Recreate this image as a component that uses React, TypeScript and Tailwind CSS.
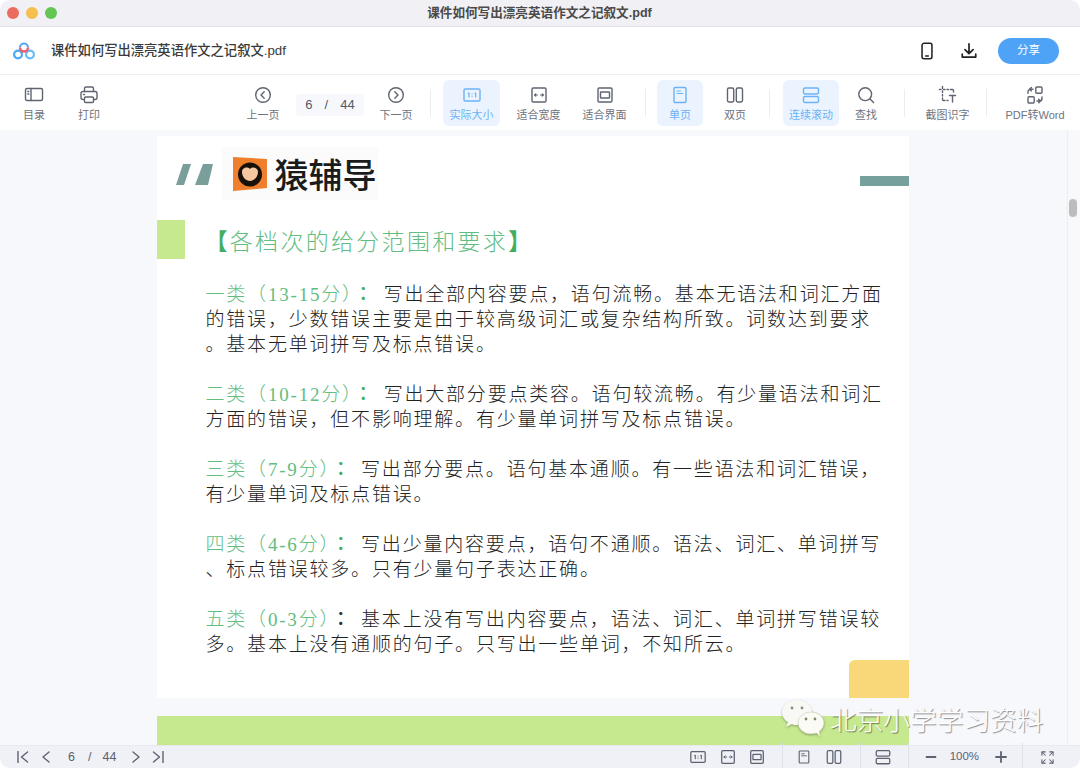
import type { ReactNode } from 'react';
import clsx from 'clsx';

const UI_FONT = "font-['Liberation_Sans','Noto_Sans_CJK_SC',sans-serif]";

function Svg({ className, children, box = 20 }: { className?: string; children: ReactNode; box?: number }) {
  return (
    <svg
      viewBox={`0 0 ${box} ${box}`}
      fill="none"
      stroke="currentColor"
      strokeWidth="1.4"
      strokeLinecap="round"
      strokeLinejoin="round"
      className={className}
    >
      {children}
    </svg>
  );
}

type IconProps = { className?: string };

const TocIcon = ({ className }: IconProps) => (
  <Svg className={className}>
    <rect x="1.500" y="3.500" width="17" height="12" rx="1.500" />
    <path d="M7 3.500v12M3.800 6.500h1M3.800 9h1" />
  </Svg>
);
const PrintIcon = ({ className }: IconProps) => (
  <Svg className={className}>
    <path d="M5.500 6.500V3.500a1.500 1.500 0 0 1 1.500-1.500h6a1.500 1.500 0 0 1 1.500 1.500v3" />
    <path d="M5 14.500H4a2 2 0 0 1-2-2V8.500a2 2 0 0 1 2-2h12a2 2 0 0 1 2 2v4a2 2 0 0 1-2 2h-1" />
    <rect x="5.500" y="12" width="9" height="5.500" rx="1" />
    <path d="M4.500 9.500h1" />
  </Svg>
);
const PrevCircle = ({ className }: IconProps) => (
  <Svg className={className}>
    <circle cx="10" cy="10" r="7.300" />
    <path d="M11.200 6.800 8 10l3.200 3.200" />
  </Svg>
);
const NextCircle = ({ className }: IconProps) => (
  <Svg className={className}>
    <circle cx="10" cy="10" r="7.300" />
    <path d="M8.800 6.800 12 10l-3.200 3.200" />
  </Svg>
);
const ActualIcon = ({ className }: IconProps) => (
  <Svg className={className}>
    <rect x="2" y="4" width="16" height="12" rx="1.200" />
    <path d="M6.300 8.500 7 8v4M13 8.500l.7-.5v4M10 8.800v.1M10 11.200v.1" strokeWidth="1.200" />
  </Svg>
);
const FitWidthIcon = ({ className }: IconProps) => (
  <Svg className={className}>
    <rect x="3" y="3" width="14" height="14" rx="1.200" />
    <path d="M5.500 10h3M11.500 10h3M6.800 8.800 5.500 10l1.300 1.200M13.200 8.800l1.300 1.200-1.300 1.200" strokeWidth="1.100" />
  </Svg>
);
const FitPageIcon = ({ className }: IconProps) => (
  <Svg className={className}>
    <rect x="3" y="3" width="14" height="14" rx="1.200" />
    <rect x="5.500" y="7" width="9" height="6" rx=".6" />
  </Svg>
);
const SingleIcon = ({ className }: IconProps) => (
  <Svg className={className}>
    <rect x="4" y="2.500" width="12" height="15" rx="1" />
    <path d="M7 6h3.500M7 8.500h6" strokeWidth="1.100" />
  </Svg>
);
const DoubleIcon = ({ className }: IconProps) => (
  <Svg className={className}>
    <rect x="2.500" y="3" width="6.200" height="14" rx="1.400" />
    <rect x="11.300" y="3" width="6.200" height="14" rx="1.400" />
  </Svg>
);
const ScrollIcon = ({ className }: IconProps) => (
  <Svg className={className}>
    <rect x="2.500" y="3" width="15" height="6" rx="1.400" />
    <rect x="2.500" y="11.500" width="15" height="6" rx="1.400" />
  </Svg>
);
const SearchIcon = ({ className }: IconProps) => (
  <Svg className={className}>
    <circle cx="9.200" cy="9.200" r="6.400" />
    <path d="m14 14 3.600 3.600" />
  </Svg>
);
const CropTextIcon = ({ className }: IconProps) => (
  <Svg className={className}>
    <path d="M4.500 1.500v2M1.500 4.500h1.500M5.500 4.500h1.500M9 4.500h1.500M12.500 4.500h2a1 1 0 0 1 1 1v1.500M4.500 6v1.500M4.500 9.500V11M4.500 13v1.500a1 1 0 0 0 1 1H7M9 15.500h1" />
    <path d="M11.500 10.500h6M14.500 10.500v6.500" />
  </Svg>
);
const ConvertIcon = ({ className }: IconProps) => (
  <Svg className={className}>
    <rect x="10.800" y="2" width="6.200" height="6.200" rx="1" />
    <rect x="3" y="11.800" width="6.200" height="6.200" rx="1" />
    <path d="M3 8V6.500A2.500 2.500 0 0 1 5.500 4H8M6.300 2.200 4.500 4l1.800 1.800" transform="translate(0 .2)" />
    <path d="M17 12v1.500a2.500 2.500 0 0 1-2.500 2.500H12M13.700 14.200l1.800 1.800-1.800 1.800" />
  </Svg>
);
const PhoneIcon = ({ className }: IconProps) => (
  <Svg className={className}>
    <rect x="4.500" y="1.500" width="11" height="17" rx="2.200" strokeWidth="1.700" />
    <path d="M8.500 15.600h3" strokeWidth="1.600" />
  </Svg>
);
const DownloadIcon = ({ className }: IconProps) => (
  <Svg className={className}>
    <path d="M10 2v10.500M5.500 8.500 10 13l4.500-4.500M2.500 13.500v3.200h15v-3.200" strokeWidth="1.900" />
  </Svg>
);
const FullscreenIcon = ({ className }: IconProps) => (
  <Svg className={className}>
    <path d="M2.500 7V2.500H7M13 2.500h4.500V7M17.500 13v4.500H13M7 17.500H2.500V13" />
    <path d="m3 3 4 4M17 3l-4 4M17 17l-4-4M3 17l4-4" />
  </Svg>
);

function AppLogo() {
  return (
    <svg viewBox="0 0 22 18" fill="none" className="w-[22px] h-[18px]">
      <circle cx="5" cy="12.500" r="3.900" stroke="#4ba8f2" strokeWidth="2.200" />
      <circle cx="17" cy="12.500" r="3.900" stroke="#67bcf6" strokeWidth="2.200" />
      <path d="M7 5.500a4 4 0 0 1 8 0" stroke="#57a9ef" strokeWidth="2.200" />
      <path d="M7 5.500a4 4 0 0 0 8 0" stroke="#ee5f6c" strokeWidth="2.400" />
    </svg>
  );
}

function ToolItem({
  icon,
  label,
  active,
  className,
}: {
  icon: ReactNode;
  label: string;
  active?: boolean;
  className?: string;
}) {
  return (
    <div
      className={clsx(
        'h-[46px] rounded-md flex flex-col items-center shrink-0',
        active ? 'bg-[#ebf4fe] text-[#6cb2f8]' : 'text-[#5f6470]',
        className,
      )}
    >
      <div className="h-[20px] mt-[5px] flex items-center justify-center">{icon}</div>
      <div className={clsx('text-[11px] leading-[14px] mt-[3px] whitespace-nowrap', active ? 'text-[#6cb2f8]' : 'text-[#6f737d]')}>
        {label}
      </div>
    </div>
  );
}

function Sep({ className }: { className?: string }) {
  return <div className={clsx('w-px h-[28px] bg-[#ededf0] shrink-0', className)} />;
}

function Toolbar() {
  const ic = 'w-[20px] h-[20px]';
  return (
    <div className="h-[55px] bg-white flex items-center pl-[12px] shrink-0">
      <ToolItem className="w-[44px]" icon={<TocIcon className={ic} />} label="目录" />
      <ToolItem className="w-[44px] ml-[11px]" icon={<PrintIcon className={ic} />} label="打印" />
      <ToolItem className="w-[44px] ml-[130px]" icon={<PrevCircle className={ic} />} label="上一页" />
      <div className="w-[68px] h-[22px] ml-[11px] mt-[5px] rounded bg-[#f7f8fc] flex items-center justify-center text-[13px] text-[#555a66] shrink-0">
        <span>6</span>
        <span className="mx-[12px]">/</span>
        <span>44</span>
      </div>
      <ToolItem className="w-[44px] ml-[10px]" icon={<NextCircle className={ic} />} label="下一页" />
      <Sep className="ml-[12px]" />
      <ToolItem className="w-[57px] ml-[12px]" active icon={<ActualIcon className={ic} />} label="实际大小" />
      <ToolItem className="w-[57px] ml-[10px]" icon={<FitWidthIcon className={ic} />} label="适合宽度" />
      <ToolItem className="w-[57px] ml-[9px]" icon={<FitPageIcon className={ic} />} label="适合界面" />
      <Sep className="ml-[12px]" />
      <ToolItem className="w-[46px] ml-[11px]" active icon={<SingleIcon className={ic} />} label="单页" />
      <ToolItem className="w-[46px] ml-[9px]" icon={<DoubleIcon className={ic} />} label="双页" />
      <Sep className="ml-[11px]" />
      <ToolItem className="w-[56px] ml-[13px]" active icon={<ScrollIcon className={ic} />} label="连续滚动" />
      <ToolItem className="w-[46px] ml-[4px]" icon={<SearchIcon className={ic} />} label="查找" />
      <Sep className="ml-[15px]" />
      <ToolItem className="w-[57px] ml-[14px]" icon={<CropTextIcon className={ic} />} label="截图识字" />
      <Sep className="ml-[10px]" />
      <ToolItem className="w-[70px] ml-[13px]" icon={<ConvertIcon className={ic} />} label="PDF转Word" />
    </div>
  );
}

const paragraphs = [
  {
    tag: '一类（13-15分',
    lines: [
      '写出全部内容要点，语句流畅。基本无语法和词汇方面',
      '的错误，少数错误主要是由于较高级词汇或复杂结构所致。词数达到要求',
      '。基本无单词拼写及标点错误。',
    ],
  },
  {
    tag: '二类（10-12分',
    lines: ['写出大部分要点类容。语句较流畅。有少量语法和词汇', '方面的错误，但不影响理解。有少量单词拼写及标点错误。'],
  },
  {
    tag: '三类（7-9分',
    lines: ['写出部分要点。语句基本通顺。有一些语法和词汇错误，', '有少量单词及标点错误。'],
  },
  {
    tag: '四类（4-6分',
    lines: ['写出少量内容要点，语句不通顺。语法、词汇、单词拼写', '、标点错误较多。只有少量句子表达正确。'],
  },
  {
    tag: '五类（0-3分',
    lines: ['基本上没有写出内容要点，语法、词汇、单词拼写错误较', '多。基本上没有通顺的句子。只写出一些单词，不知所云。'],
  },
];

function PdfPage() {
  return (
    <div className="w-[752px] h-[562px] mt-[6px] bg-white flex flex-col shrink-0 font-['Liberation_Serif','Noto_Sans_CJK_SC',serif] [text-spacing-trim:space-all]">
      <div className="flex items-start h-[64px] pt-[11px] shrink-0">
        <svg viewBox="0 0 37 21" className="w-[37px] h-[21px] ml-[19px] mt-[17px] shrink-0">
          <path d="M7 0h8l-7 21H0zM27 0h10l-5 21H19z" fill="#7a9f9a" />
        </svg>
        <div className="w-[156px] h-[53px] ml-[9px] bg-[#fbfbfb] flex items-center shrink-0">
          <svg viewBox="0 0 34 34" className="w-[34px] h-[34px] ml-[11px] shrink-0">
            <path d="M0 0 34 2v29L0 34z" fill="#ef7f2c" />
            <circle cx="17" cy="17.500" r="12" fill="#17110a" />
            <path d="M17 12c3-3 8-1 8 3 0 5-4 9-8 9s-8-4-8-9c0-4 5-6 8-3z" fill="#f4c7a1" />
          </svg>
          <span className="ml-[8px] text-[34px] leading-none font-medium text-[#1b1b1b] font-['Noto_Sans_CJK_SC',sans-serif] whitespace-nowrap">
            猿辅导
          </span>
        </div>
        <div className="w-[49px] h-[10px] mt-[29px] ml-auto bg-[#75a09b] shrink-0" />
      </div>

      <div className="flex items-start mt-[20px] h-[39px] shrink-0">
        <div className="w-[28px] h-[39px] bg-[#c6e88e] shrink-0" />
        <div className="ml-[20px] text-[23px] leading-[45px] tracking-[2.300px] font-light text-[#62bd80] whitespace-nowrap">
          <span className="font-bold text-[#43ad60]">【</span>各档次的给分范围和要求<span className="font-bold text-[#43ad60]">】</span>
        </div>
      </div>

      <div className="pl-[49px] mt-[23px] text-[19px] leading-[25px] tracking-[1.800px] font-light text-[#222] whitespace-nowrap">
        {paragraphs.map((p, n) => (
          <div key={p.tag} className={clsx(n < paragraphs.length - 1 && 'mb-[25px]')}>
            {p.lines.map((line, i) => (
              <div key={line} className="h-[25px]">
                {i === 0 && (
                  <>
                    <span className="text-[#62bd80]">
                      {p.tag}
                      <span className="tracking-[-7.200px]">）</span>
                    </span>
                    <span
                      className={clsx(
                        "mr-[9px] font-medium font-['Liberation_Serif','Noto_Sans_CJK_TC',serif]",
                        n < 4 ? 'text-[#43ad60]' : 'text-[#333]',
                      )}
                    >
                      ：
                    </span>
                  </>
                )}
                {line}
              </div>
            ))}
          </div>
        ))}
      </div>

      <div className="mt-auto self-end w-[60px] h-[38px] bg-[#f8d878] rounded-tl-md shrink-0" />
    </div>
  );
}

function Watermark() {
  return (
    <div className="absolute left-[782px] top-[700px] flex items-center">
      <svg viewBox="0 0 44 38" className="w-[44px] h-[38px] drop-shadow-[0_1px_1px_rgba(0,0,0,0.3)]">
        <path d="M15 0c8 0 15 5 15 12 0 7-7 13-15 13-2 0-4 0-5-1l-6 3 2-5C2 20 0 16 0 12 0 5 7 0 15 0z" fill="#f8f8f4" />
        <ellipse cx="29" cy="23" rx="13" ry="11" fill="#fbfbf6" stroke="#b9c0a8" strokeWidth=".5" />
        <path d="m34 32 4 5-1-7z" fill="#fbfbf6" />
        <circle cx="10" cy="8" r="1.400" fill="#8a8a80" />
        <circle cx="20" cy="8" r="1.400" fill="#8a8a80" />
        <circle cx="24" cy="19" r="1.400" fill="#7a8a60" />
        <circle cx="33" cy="19" r="1.400" fill="#7a8a60" />
      </svg>
      <span className="ml-[4px] text-[26.700px] leading-none font-light text-white font-['Noto_Sans_CJK_SC',sans-serif] whitespace-nowrap [text-shadow:1px_1px_1px_rgba(0,0,0,0.45)]">
        北京小学学习资料
      </span>
    </div>
  );
}

function StatusBar() {
  const c = 'shrink-0 text-[#5c6270]';
  return (
    <div className="h-[23px] bg-[#f0f1f6] border-t border-[#e8e9ee] flex items-center pl-[17px] shrink-0 text-[11.500px] text-[#5c6270]">
      <Svg className={clsx(c, 'w-[12px] h-[12px]')} box={12}>
        <path d="M1 .5v11M10.500 1 4.500 6l6 5" />
      </Svg>
      <Svg className={clsx(c, 'w-[12px] h-[12px] ml-[11px]')} box={12}>
        <path d="M9 1 3 6l6 5" />
      </Svg>
      <span className="ml-[16px] text-[12.500px]">6</span>
      <span className="ml-[13px] text-[12.500px]">/</span>
      <span className="ml-[11px] text-[12.500px]">44</span>
      <Svg className={clsx(c, 'w-[12px] h-[12px] ml-[14px]')} box={12}>
        <path d="m3 1 6 5-6 5" />
      </Svg>
      <Svg className={clsx(c, 'w-[12px] h-[12px] ml-[10px]')} box={12}>
        <path d="M11 .5v11M1.500 1l6 5-6 5" />
      </Svg>

      <ActualIcon className={clsx(c, 'w-[18px] h-[18px] ml-[525px]')} />
      <FitWidthIcon className={clsx(c, 'w-[18px] h-[18px] ml-[12px]')} />
      <FitPageIcon className={clsx(c, 'w-[18px] h-[18px] ml-[11px]')} />
      <Sep className="h-[14px] ml-[16px] !bg-[#dfe0e6]" />
      <SingleIcon className={clsx(c, 'w-[16px] h-[16px] ml-[13px]')} />
      <DoubleIcon className={clsx(c, 'w-[18px] h-[18px] ml-[13px]')} />
      <Sep className="h-[14px] ml-[17px] !bg-[#dfe0e6]" />
      <ScrollIcon className={clsx(c, 'w-[18px] h-[18px] ml-[13px]')} />
      <Sep className="h-[14px] ml-[16px] !bg-[#dfe0e6]" />
      <Svg className={clsx(c, 'w-[12px] h-[12px] ml-[16px]')} box={12}>
        <path d="M1.500 6h9" strokeWidth="1.800" />
      </Svg>
      <span className="ml-[12px] w-[30px] text-center">100%</span>
      <Svg className={clsx(c, 'w-[12px] h-[12px] ml-[16px]')} box={12}>
        <path d="M1 6h10M6 1v10" strokeWidth="1.800" />
      </Svg>
      <Sep className="h-[14px] ml-[15px] !bg-[#dfe0e6]" />
      <FullscreenIcon className={clsx(c, 'w-[15px] h-[15px] ml-[17px]')} />
    </div>
  );
}

export default function App() {
  return (
    <div className={clsx('relative w-[1080px] h-[768px] overflow-hidden rounded-[10px] bg-white flex flex-col', UI_FONT)}>
      <div className="h-[27px] bg-[#f1f0f5] border-b border-[#e4e3e8] flex items-center pl-[7px] relative shrink-0">
        <div className="w-[12px] h-[12px] rounded-full bg-[#ed6a5e]" />
        <div className="w-[12px] h-[12px] rounded-full bg-[#f5bf4f] ml-[7px]" />
        <div className="w-[12px] h-[12px] rounded-full bg-[#62c554] ml-[7px]" />
        <div className="flex-1 text-center text-[12.600px] font-bold text-[#4a4a4a] pr-[58px]">课件如何写出漂亮英语作文之记叙文.pdf</div>
      </div>

      <div className="h-[48px] bg-white border-b border-[#eeeef0] flex items-center pl-[13px] shrink-0">
        <AppLogo />
        <div className="ml-[16px] text-[13.300px] font-medium text-[#3a3a3a]">课件如何写出漂亮英语作文之记叙文.pdf</div>
        <PhoneIcon className="w-[18px] h-[18px] ml-auto text-[#222]" />
        <DownloadIcon className="w-[18px] h-[18px] ml-[24px] text-[#222]" />
        <div className="w-[61px] h-[26px] ml-[20px] mr-[21px] rounded-full bg-[#4fa3f7] text-white text-[11.500px] flex items-center justify-center">
          分享
        </div>
      </div>

      <Toolbar />

      <div className="flex-1 min-h-0 flex bg-[#f7f8fc]">
        <div className="flex-1 min-w-0 flex flex-col items-center overflow-hidden pr-[2px]">
          <PdfPage />
          <div className="w-[752px] h-[40px] mt-[18px] bg-[#c6e88e] shrink-0" />
        </div>
        <div className="w-[13px] bg-[#f9f9fb] border-l border-[#eeeef1] pt-[69px] pl-[1px] shrink-0">
          <div className="w-[8px] h-[18px] rounded-full bg-[#bcbcbc]" />
        </div>
      </div>

      <StatusBar />
      <Watermark />
    </div>
  );
}
